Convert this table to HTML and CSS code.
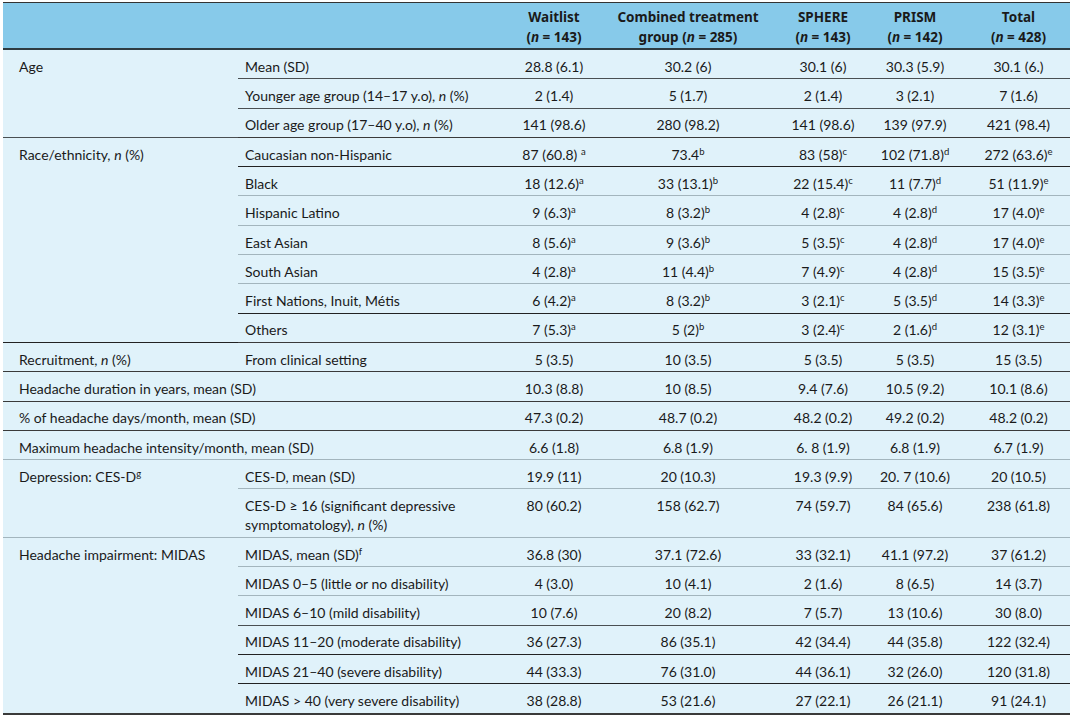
FILE: index.html
```html
<!DOCTYPE html>
<html lang="en">
<head>
<meta charset="utf-8">
<title>Baseline characteristics</title>
<link rel="stylesheet" href="styles.css">
</head>
<body>
<table class="tbl">
  <colgroup>
    <col class="c-lab1">
    <col class="c-lab2">
    <col class="c-wait">
    <col class="c-comb">
    <col class="c-sph">
    <col class="c-pri">
    <col class="c-tot">
  </colgroup>
  <thead>
    <tr>
      <th class="blank"></th>
      <th class="blank"></th>
      <th>Waitlist<br>(<i>n</i> = 143)</th>
      <th>Combined treatment<br>group (<i>n</i> = 285)</th>
      <th>SPHERE<br>(<i>n</i> = 143)</th>
      <th>PRISM<br>(<i>n</i> = 142)</th>
      <th>Total<br>(<i>n</i> = 428)</th>
    </tr>
  </thead>
  <tbody>
    <tr class="md">
      <td class="lab1 grp-g" rowspan="3">Age</td>
      <td class="lab2">Mean (SD)</td>
      <td>28.8 (6.1)</td><td>30.2 (6)</td><td>30.1 (6)</td><td>30.3 (5.9)</td><td>30.1 (6.)</td>
    </tr>
    <tr class="md">
      <td class="lab2">Younger age group (14–17 y.o), <i>n</i> (%)</td>
      <td>2 (1.4)</td><td>5 (1.7)</td><td>2 (1.4)</td><td>3 (2.1)</td><td>7 (1.6)</td>
    </tr>
    <tr class="g">
      <td class="lab2">Older age group (17–40 y.o), <i>n</i> (%)</td>
      <td>141 (98.6)</td><td>280 (98.2)</td><td>141 (98.6)</td><td>139 (97.9)</td><td>421 (98.4)</td>
    </tr>

    <tr class="dk">
      <td class="lab1 grp-g" rowspan="7">Race/ethnicity, <i>n</i> (%)</td>
      <td class="lab2">Caucasian non-Hispanic</td>
      <td>87 (60.8) <sup>a</sup></td><td>73.4<sup>b</sup></td><td>83 (58)<sup>c</sup></td><td>102 (71.8)<sup>d</sup></td><td>272 (63.6)<sup>e</sup></td>
    </tr>
    <tr>
      <td class="lab2">Black</td>
      <td>18 (12.6)<sup>a</sup></td><td>33 (13.1)<sup>b</sup></td><td>22 (15.4)<sup>c</sup></td><td>11 (7.7)<sup>d</sup></td><td>51 (11.9)<sup>e</sup></td>
    </tr>
    <tr>
      <td class="lab2">Hispanic Latino</td>
      <td>9 (6.3)<sup>a</sup></td><td>8 (3.2)<sup>b</sup></td><td>4 (2.8)<sup>c</sup></td><td>4 (2.8)<sup>d</sup></td><td>17 (4.0)<sup>e</sup></td>
    </tr>
    <tr>
      <td class="lab2">East Asian</td>
      <td>8 (5.6)<sup>a</sup></td><td>9 (3.6)<sup>b</sup></td><td>5 (3.5)<sup>c</sup></td><td>4 (2.8)<sup>d</sup></td><td>17 (4.0)<sup>e</sup></td>
    </tr>
    <tr>
      <td class="lab2">South Asian</td>
      <td>4 (2.8)<sup>a</sup></td><td>11 (4.4)<sup>b</sup></td><td>7 (4.9)<sup>c</sup></td><td>4 (2.8)<sup>d</sup></td><td>15 (3.5)<sup>e</sup></td>
    </tr>
    <tr class="dk">
      <td class="lab2">First Nations, Inuit, Métis</td>
      <td>6 (4.2)<sup>a</sup></td><td>8 (3.2)<sup>b</sup></td><td>3 (2.1)<sup>c</sup></td><td>5 (3.5)<sup>d</sup></td><td>14 (3.3)<sup>e</sup></td>
    </tr>
    <tr class="g">
      <td class="lab2">Others</td>
      <td>7 (5.3)<sup>a</sup></td><td>5 (2)<sup>b</sup></td><td>3 (2.4)<sup>c</sup></td><td>2 (1.6)<sup>d</sup></td><td>12 (3.1)<sup>e</sup></td>
    </tr>

    <tr class="g">
      <td class="lab1">Recruitment, <i>n</i> (%)</td>
      <td class="lab2">From clinical setting</td>
      <td>5 (3.5)</td><td>10 (3.5)</td><td>5 (3.5)</td><td>5 (3.5)</td><td>15 (3.5)</td>
    </tr>
    <tr class="g">
      <td class="lab1" colspan="2">Headache duration in years, mean (SD)</td>
      <td>10.3 (8.8)</td><td>10 (8.5)</td><td>9.4 (7.6)</td><td>10.5 (9.2)</td><td>10.1 (8.6)</td>
    </tr>
    <tr class="g">
      <td class="lab1" colspan="2">% of headache days/month, mean (SD)</td>
      <td>47.3 (0.2)</td><td>48.7 (0.2)</td><td>48.2 (0.2)</td><td>49.2 (0.2)</td><td>48.2 (0.2)</td>
    </tr>
    <tr>
      <td class="lab1" colspan="2">Maximum headache intensity/month, mean (SD)</td>
      <td>6.6 (1.8)</td><td>6.8 (1.9)</td><td>6. 8 (1.9)</td><td>6.8 (1.9)</td><td>6.7 (1.9)</td>
    </tr>

    <tr>
      <td class="lab1 grp-l" rowspan="2">Depression: CES-D<sup>g</sup></td>
      <td class="lab2">CES-D, mean (SD)</td>
      <td>19.9 (11)</td><td>20 (10.3)</td><td>19.3 (9.9)</td><td>20. 7 (10.6)</td><td>20 (10.5)</td>
    </tr>
    <tr>
      <td class="lab2">CES-D ≥ 16 (significant depressive<br>symptomatology), <i>n</i> (%)</td>
      <td>80 (60.2)</td><td>158 (62.7)</td><td>74 (59.7)</td><td>84 (65.6)</td><td>238 (61.8)</td>
    </tr>

    <tr>
      <td class="lab1 grp-end" rowspan="6">Headache impairment: MIDAS</td>
      <td class="lab2">MIDAS, mean (SD)<sup>f</sup></td>
      <td>36.8 (30)</td><td>37.1 (72.6)</td><td>33 (32.1)</td><td>41.1 (97.2)</td><td>37 (61.2)</td>
    </tr>
    <tr>
      <td class="lab2">MIDAS 0–5 (little or no disability)</td>
      <td>4 (3.0)</td><td>10 (4.1)</td><td>2 (1.6)</td><td>8 (6.5)</td><td>14 (3.7)</td>
    </tr>
    <tr class="md">
      <td class="lab2">MIDAS 6–10 (mild disability)</td>
      <td>10 (7.6)</td><td>20 (8.2)</td><td>7 (5.7)</td><td>13 (10.6)</td><td>30 (8.0)</td>
    </tr>
    <tr class="dk">
      <td class="lab2">MIDAS 11–20 (moderate disability)</td>
      <td>36 (27.3)</td><td>86 (35.1)</td><td>42 (34.4)</td><td>44 (35.8)</td><td>122 (32.4)</td>
    </tr>
    <tr class="dk">
      <td class="lab2">MIDAS 21–40 (severe disability)</td>
      <td>44 (33.3)</td><td>76 (31.0)</td><td>44 (36.1)</td><td>32 (26.0)</td><td>120 (31.8)</td>
    </tr>
    <tr class="end">
      <td class="lab2">MIDAS &gt; 40 (very severe disability)</td>
      <td>38 (28.8)</td><td>53 (21.6)</td><td>27 (22.1)</td><td>26 (21.1)</td><td>91 (24.1)</td>
    </tr>
  </tbody>
</table>
</body>
</html>
```

FILE: styles.css
```css
html, body {
  margin: 0;
  padding: 0;
  background: #ffffff;
}

body {
  padding: 2px 3px 0 3px;
  font-family: Lato, "Noto Sans", "Liberation Sans", sans-serif;
  font-size: 14px;
  color: #1a1a1a;
}

.tbl {
  width: 1067px;
  table-layout: fixed;
  border-collapse: collapse;
  background: #e0f2fa;
  border-top: 1.5px solid #333333;
}

.c-lab1 { width: 235px; }
.c-lab2 { width: 277px; }
.c-wait { width: 78px; }
.c-comb { width: 190px; }
.c-sph  { width: 80px; }
.c-pri  { width: 104px; }
.c-tot  { width: 103px; }

thead th {
  background: #87caea;
  font-family: "Noto Sans", Lato, sans-serif;
  font-size: 13.5px;
  font-weight: 700;
  text-align: center;
  line-height: 20px;
  padding: 4px 2px 1px;
  border-bottom: 2px solid #2e3b42;
  white-space: nowrap;
}

td {
  padding: 6.8px 4px 2.5px;
  line-height: 19px;
  text-align: center;
  vertical-align: top;
  white-space: nowrap;
  border-bottom: 1px solid #a3b5bd;
}

td.lab1 {
  text-align: left;
  padding-left: 16px;
}

td.lab2 {
  text-align: left;
  padding-left: 7px;
}

tr.md td { border-bottom: 1px solid #4a4f52; }
tr.dk td { border-bottom: 1px solid #222222; }
tr.g td { border-bottom: 1.5px solid #3a3a3a; }
tr.end td { border-bottom: 2px solid #3a3a3a; }

td.grp-g { border-bottom: 1.5px solid #3a3a3a; }
td.grp-l { border-bottom: 1px solid #a3b5bd; }
td.grp-end { border-bottom: 2px solid #3a3a3a; }

sup {
  font-size: 9.5px;
  line-height: 0;
  vertical-align: 0.5em;
}

i {
  font-style: italic;
}
```
